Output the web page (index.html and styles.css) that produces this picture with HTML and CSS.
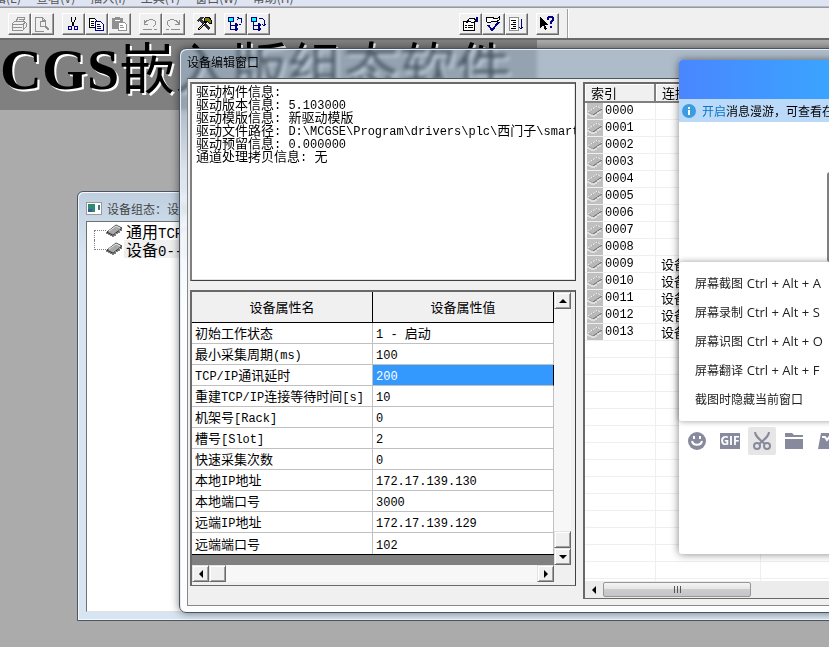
FILE: index.html
```html
<!doctype html><html lang="zh-CN">
<head><meta charset="utf-8"/><title>设备编辑窗口</title>
<meta name="viewport" content="width=device-width, initial-scale=1">
<link rel="stylesheet" href="styles.css">
</head>
<body>

<!-- 共用图标 -->
<svg class="defs" aria-hidden="true">
	<symbol id="chip" viewBox="0 0 17 14">
		<path d="M1 8L10 1L16 4L7 11Z" fill="#a8a8a8" stroke="#444"/>
		<path d="M3 7L10 2L14 4" fill="none" stroke="#e8e8e8"/>
		<path d="M1 8V10M3 9V11M5 10V12M7 11V13M9 10V12M11 8V10M13 7V9M15 5V7" stroke="#000"/>
	</symbol>
	<symbol id="chipoff" viewBox="0 0 16 16">
		<path d="M1 9L10 3L15 6L6 12Z" fill="#b8b8b8" stroke="#a0a0a0"/>
		<path d="M1 9L10 3L15 6" fill="none" stroke="#fff" stroke-dasharray="2 1"/>
		<path d="M6 12L15 6" stroke="#707070"/>
		<path d="M1 10V12M3 11V13M5 12V14M7 12V14M9 11V13M11 9V11M13 8V10" stroke="#fff"/>
	</symbol>
</svg>

<nav class="menubar">
	<a href="#">编辑(E)</a>
	<a href="#">查看(V)</a>
	<a href="#">插入(I)</a>
	<a href="#">工具(T)</a>
	<a href="#">窗口(W)</a>
	<a href="#">帮助(H)</a>
</nav>

<div class="toolbar">
	<div class="group">
		<button type="button" aria-label="打印"><svg viewBox="0 0 16 16"><g fill="none" stroke="#909090"><path d="M5 6L7 1H14L12 6M1 8L4 5H13L15 7V11L12 14H1ZM1 8H12V14M12 8L15 6M2 11H11M8 3H12M7 5H11"/></g></svg></button>
		<button type="button" aria-label="打印预览"><svg viewBox="0 0 16 16"><g fill="none" stroke="#909090"><path d="M1 1H8L11 4V5M1 1V15H10M8 1V4H11"/><circle cx="9" cy="8" r="3"/><path d="M11 10L15 14" stroke-width="2"/></g></svg></button>
	</div>
	<div class="group">
		<button type="button" aria-label="剪切"><svg viewBox="0 0 16 16"><path d="M6 1V4L9 10M10 1V4L7 10" fill="none" stroke="#000"/><circle cx="5" cy="12" r="2" fill="none" stroke="#000080"/><circle cx="11" cy="12" r="2" fill="none" stroke="#000080"/></svg></button>
		<button type="button" aria-label="复制"><svg viewBox="0 0 16 16"><path d="M1 2H6L8 4V11H1Z" fill="#fff" stroke="#000"/><path d="M3 5H6M3 7H6M3 9H6" stroke="#000"/><path d="M7 5H12L15 8V14H7Z" fill="#fff" stroke="#000080"/><path d="M9 8H12M9 10H13M9 12H13" stroke="#000080"/></svg></button>
		<button type="button" aria-label="粘贴"><svg viewBox="0 0 16 16"><path d="M1 2H4V1H9V2H12V13H1Z" fill="#909090"/><path d="M4 4H9" stroke="#fff"/><path d="M7 6H13L15 8V14H7Z" fill="#fff" stroke="#909090"/><path d="M9 9H12M9 11H13" stroke="#909090"/></svg></button>
	</div>
	<div class="group">
		<button type="button" aria-label="撤消"><svg viewBox="0 0 16 16"><path d="M2 4V8H6M2 8C5 2 13 3 14 7C14 9 12 10 11 11M1 13H10M12 13H15" fill="none" stroke="#909090"/></svg></button>
		<button type="button" aria-label="重复"><svg viewBox="0 0 16 16"><path d="M14 4V8H10M14 8C11 2 3 3 2 7C2 9 4 10 5 11M1 13H4M6 13H15" fill="none" stroke="#909090"/></svg></button>
	</div>
	<div class="group">
		<button type="button" aria-label="工具箱"><svg viewBox="0 0 16 16"><path d="M1 4L4 1H8L6 3L7 5L14 12L12 14L5 7L4 5L2 6Z" fill="#333"/><path d="M2 14L10 6" stroke="#000" stroke-width="2"/><path d="M3 13L9 7" stroke="#e8e0a0"/><path d="M8 3L10 1H13L15 4V7H13L11 5L9 6Z" fill="#808000" stroke="#000"/></svg></button>
	</div>
	<div class="group">
		<button type="button" aria-label="设备组态"><svg viewBox="0 0 16 16"><rect x="1" y="1" width="5" height="4" fill="#0ff" stroke="#000080"/><path d="M3 5V13H8M3 9H8M12 2H14V7M10 4L12 2L10 1M12 8L14 9" fill="none" stroke="#000080"/><path d="M8 7L11 9L8 11ZM8 11L11 13L8 15Z" fill="#0aa" stroke="#000080"/></svg></button>
		<button type="button" aria-label="设备展开"><svg viewBox="0 0 16 16"><rect x="1" y="1" width="5" height="4" fill="#0ff" stroke="#000080"/><path d="M3 5V13H8M3 9H8M9 2H12L14 4V10M12 8L14 10L16 8" fill="none" stroke="#000080"/><path d="M8 7L11 9L8 11ZM8 11L11 13L8 15Z" fill="#0aa" stroke="#000080"/></svg></button>
	</div>
	<div class="group group-far">
		<button type="button" aria-label="属性"><svg viewBox="0 0 16 16"><path d="M1 5H12V14H1Z" fill="#fff" stroke="#000"/><path d="M3 9H5M6 9H11M3 11H5M6 11H11M4 7L8 2H12L14 5L10 7L8 5Z" fill="#fff" stroke="#000"/><path d="M15 1V6" stroke="#000080" stroke-width="2"/></svg></button>
		<button type="button" aria-label="检查"><svg viewBox="0 0 16 16"><path d="M1 2L3 1H8V3L10 2L12 3L14 1V4L11 6L8 5L6 6H2Z" fill="#fff" stroke="#000"/><path d="M3 9L7 14L14 6" fill="none" stroke="#000080" stroke-width="2"/></svg></button>
		<button type="button" aria-label="排序"><svg viewBox="0 0 16 16"><path d="M1 1H10V14H1Z" fill="#fff" stroke="#909090"/><path d="M3 4H8M5 6H8M3 8H8M5 10H8M3 12H8" stroke="#000"/><path d="M13 3V13M11 11L13 13L15 11" fill="none" stroke="#000080"/></svg></button>
	</div>
	<div class="group">
		<button type="button" aria-label="帮助"><svg viewBox="0 0 16 16"><path d="M1 0V12L4 9L6 14L8 13L6 9H9Z"/><path d="M9 4V2L10 1H13L14 2V4L12 6V8M12 10V12" fill="none" stroke="#000080" stroke-width="2"/></svg></button>
	</div>
	<div class="separator"></div>
</div>

<main class="desktop">
	<h1 class="banner">CGS<span>嵌入版组态软件</span></h1>

	<section class="window config">
		<header class="titlebar">
			<svg class="winicon" viewBox="0 0 16 13"><rect x="0" y="0" width="16" height="13" fill="#999"/><rect x="1" y="1" width="14" height="11" fill="#fff"/><rect x="2" y="2" width="7" height="8" fill="#2d8a72"/><rect x="2" y="7" width="4" height="3" fill="#3c58a0"/><rect x="12" y="3" width="2" height="5" fill="#3c7a80"/></svg>
			<span>设备组态：设备窗口</span>
		</header>
		<ul class="tree">
			<li><svg><use href="#chip"/></svg><span>通用<b>TCP</b>父设备</span></li>
			<li><svg><use href="#chip"/></svg><span class="current">设备<b>0--</b>[西门子]</span></li>
		</ul>
	</section>

	<section class="window editor">
		<header class="titlebar">设备编辑窗口</header>
		<div class="client">
			<div class="left">
				<div class="info">
					<p>驱动构件信息<b>:</b></p>
					<p>驱动版本信息<b>: 5.103000</b></p>
					<p>驱动模版信息<b>: </b>新驱动模版</p>
					<p>驱动文件路径<b>: D:\MCGSE\Program\drivers\plc\</b>西门子<b>\smart</b></p>
					<p>驱动预留信息<b>: 0.000000</b></p>
					<p>通道处理拷贝信息<b>: </b>无</p>
				</div>
				<div class="props">
					<div class="props-main">
						<table>
							<thead>
								<tr><th>设备属性名</th><th>设备属性值</th></tr>
							</thead>
							<tbody>
								<tr><td>初始工作状态</td><td><b>1 - </b>启动</td></tr>
								<tr><td>最小采集周期<b>(ms)</b></td><td><b>100</b></td></tr>
								<tr><td><b>TCP/IP</b>通讯延时</td><td class="selected"><b>200</b></td></tr>
								<tr><td>重建<b>TCP/IP</b>连接等待时间<b>[s]</b></td><td><b>10</b></td></tr>
								<tr><td>机架号<b>[Rack]</b></td><td><b>0</b></td></tr>
								<tr><td>槽号<b>[Slot]</b></td><td><b>2</b></td></tr>
								<tr><td>快速采集次数</td><td><b>0</b></td></tr>
								<tr><td>本地<b>IP</b>地址</td><td><b>172.17.139.130</b></td></tr>
								<tr><td>本地端口号</td><td><b>3000</b></td></tr>
								<tr><td>远端<b>IP</b>地址</td><td><b>172.17.139.129</b></td></tr>
								<tr><td>远端端口号</td><td><b>102</b></td></tr>
							</tbody>
						</table>
						<div class="vscroll">
							<button type="button" aria-label="向上"><svg viewBox="0 0 8 4"><path d="M0 4L4 0L8 4Z"/></svg></button>
							<div class="track"></div>
							<div class="thumb"></div>
							<button type="button" aria-label="向下"><svg viewBox="0 0 8 4"><path d="M0 0L4 4L8 0Z"/></svg></button>
						</div>
					</div>
					<div class="hscroll">
						<button type="button" aria-label="向左"><svg class="side" viewBox="0 0 4 8"><path d="M4 0L0 4L4 8Z"/></svg></button>
						<div class="thumb"></div>
						<div class="track"></div>
						<button type="button" aria-label="向右"><svg class="side" viewBox="0 0 4 8"><path d="M0 0L4 4L0 8Z"/></svg></button>
					</div>
				</div>
			</div>
			<div class="channels">
				<table>
					<thead>
						<tr><th>索引</th><th>连接变量</th><th></th></tr>
					</thead>
					<tbody>
						<tr><td><svg><use href="#chipoff"/></svg>0000</td><td></td><td></td></tr>
						<tr><td><svg><use href="#chipoff"/></svg>0001</td><td></td><td></td></tr>
						<tr><td><svg><use href="#chipoff"/></svg>0002</td><td></td><td></td></tr>
						<tr><td><svg><use href="#chipoff"/></svg>0003</td><td></td><td></td></tr>
						<tr><td><svg><use href="#chipoff"/></svg>0004</td><td></td><td></td></tr>
						<tr><td><svg><use href="#chipoff"/></svg>0005</td><td></td><td></td></tr>
						<tr><td><svg><use href="#chipoff"/></svg>0006</td><td></td><td></td></tr>
						<tr><td><svg><use href="#chipoff"/></svg>0007</td><td></td><td></td></tr>
						<tr><td><svg><use href="#chipoff"/></svg>0008</td><td></td><td></td></tr>
						<tr><td><svg><use href="#chipoff"/></svg>0009</td><td>设备</td><td></td></tr>
						<tr><td><svg><use href="#chipoff"/></svg>0010</td><td>设备</td><td></td></tr>
						<tr><td><svg><use href="#chipoff"/></svg>0011</td><td>设备</td><td></td></tr>
						<tr><td><svg><use href="#chipoff"/></svg>0012</td><td>设备</td><td></td></tr>
						<tr><td><svg><use href="#chipoff"/></svg>0013</td><td>设备</td><td></td></tr>
					</tbody>
				</table>
				<div class="blank"></div>
				<div class="aeroscroll">
					<button type="button" aria-label="向左"><svg viewBox="0 0 4 8"><path d="M4 0L0 4L4 8Z"/></svg></button>
					<div class="grip"><i></i><i></i><i></i></div>
				</div>
			</div>
		</div>
	</section>

	<section class="chat">
		<header></header>
		<p class="notice">
			<svg viewBox="0 0 14 14"><circle cx="7" cy="7" r="7" fill="#3c9ce0"/><path d="M6 3H8V5H6ZM6 6H8V11H6Z" fill="#fff"/></svg>
			<span><a href="#">开启</a>消息漫游，可查看在其他设备</span>
		</p>
		<div class="history"><div class="bar"></div></div>
		<ul class="shortcuts">
			<li><button type="button">屏幕截图 <kbd>Ctrl + Alt + A</kbd></button></li>
			<li><button type="button">屏幕录制 <kbd>Ctrl + Alt + S</kbd></button></li>
			<li><button type="button">屏幕识图 <kbd>Ctrl + Alt + O</kbd></button></li>
			<li><button type="button">屏幕翻译 <kbd>Ctrl + Alt + F</kbd></button></li>
			<li><button type="button">截图时隐藏当前窗口</button></li>
		</ul>
		<div class="chatbar">
			<button type="button" aria-label="表情"><svg viewBox="0 0 20 18"><circle cx="9" cy="9" r="9" fill="#868a9c"/><path d="M6 4V7M12 4V7" stroke="#fff" stroke-width="2"/><path d="M4 9C5 14 13 14 14 9" fill="none" stroke="#fff" stroke-width="2"/></svg></button>
			<button type="button" class="gif">GIF</button>
			<button type="button" class="on" aria-label="截图"><svg viewBox="0 0 20 18"><g fill="none" stroke="#868a9c" stroke-width="2"><path d="M3 0C3 4 7 7 13 12M17 0C17 4 13 7 7 12"/><circle cx="5" cy="14" r="3"/><circle cx="15" cy="14" r="3"/></g></svg></button>
			<button type="button" aria-label="文件"><svg viewBox="0 0 20 18"><path d="M1 1H8L10 3H19V5H1ZM1 7H19V17H1Z" fill="#868a9c"/></svg></button>
			<button type="button" aria-label="更多"><svg viewBox="0 0 20 18"><path d="M5 1H20V17H2Z" fill="#868a9c"/><path d="M6 5H9L11 8L14 4H17" fill="none" stroke="#fff" stroke-width="2"/></svg></button>
		</div>
	</section>
</main>

</body></html>
```

FILE: styles.css
```css
* {box-sizing: border-box;}
html, body {height: 100%;}
body {
	margin: 0;
	display: flex;
	flex-direction: column;
	overflow: hidden;
	font: 12px/16px "Noto Sans CJK SC", sans-serif;
	color: #000;
	background: #ababab;
}
p, ul, h1 {margin: 0; padding: 0;}
ul {list-style: none;}
button {padding: 0; margin: 0; border: 0; font: inherit; color: inherit;}
svg {display: block; flex: none;}
.defs {position: absolute; width: 0; height: 0;}

/* 半角字符，不影响行高 */
b {
	font: 12px/0 "Liberation Mono", monospace;
	white-space: pre;
}

/* 菜单栏（上半部分滚出画面） */
.menubar {
	display: flex;
	align-items: flex-end;
	gap: 15px;
	height: 7px;
	margin-left: -18px;
	overflow: hidden;
	flex: none;
	background: #dfe4f3;
	border-bottom: 1px solid #b4b8c8;
}
.menubar a {color: #555; text-decoration: none; white-space: nowrap;}

.toolbar {
	display: flex;
	align-items: center;
	gap: 8px;
	height: 33px;
	padding: 1px 0 0 8px;
	flex: none;
	background: #f0f0f0;
	border-top: 1px solid #999;
	border-bottom: 2px solid #696969;
}
.toolbar .group {display: flex;}
.toolbar .group-far {margin-left: 181px;}
.toolbar button {
	width: 23px;
	height: 22px;
	padding: 2px;
	background: #f0f0f0;
	border: 1px solid;
	border-color: #fff #696969 #696969 #fff;
	box-shadow: inset -1px -1px #a0a0a0;
}
.toolbar svg {width: 16px; height: 16px; shape-rendering: crispEdges;}
.separator {width: 2px; align-self: stretch; border-left: 1px solid #a0a0a0; background: #fff;}

.desktop {position: relative; flex: 1; overflow: hidden;}
.banner {
	width: 537px;
	height: 70px;
	font: bold 58px/50px "Liberation Serif", "Noto Sans CJK SC", serif;
	white-space: nowrap;
	background: #808080;
	text-shadow: 2px 2px #fff;
}
.banner span {font: 56px/50px "Noto Sans CJK SC", sans-serif;}

.window {
	position: absolute;
	display: flex;
	flex-direction: column;
	border: 1px solid #4c5560;
	border-radius: 7px;
}

/* 设备组态窗口 */
.config {
	top: 151px;
	left: 77px;
	right: -30px;
	bottom: 26px;
	padding: 0 7px 8px 8px;
	border-radius: 6px 6px 0 0;
	background: linear-gradient(#bfcfdf, #d7e4f2 60px);
	box-shadow: inset 1px 1px #f4f8fc, inset -1px -1px #f4f8fc;
}
.config .titlebar {
	display: flex;
	align-items: center;
	gap: 5px;
	height: 29px;
	padding-top: 4px;
	color: #444;
}
.winicon {width: 16px; height: 13px;}
.tree {
	flex: 1;
	padding: 0 7px;
	font-size: 16px;
	line-height: 18px;
	background: #fff;
	border: 1px solid #707070;
	border-bottom-color: #e0e0e0;
}
.tree li {display: flex; align-items: center;}
.tree li::before {
	content: "";
	width: 11px;
	height: 9px;
	align-self: flex-end;
	border: 1px dotted #808080;
	border-width: 1px 0 0 1px;
}
.tree li:last-child::before {align-self: flex-start; border-width: 0 0 1px 1px;}
.tree svg {width: 17px; height: 14px;}
.tree span {padding: 0 2px; margin-left: 1px; white-space: nowrap;}
.tree b {font-size: 14px;}
.tree .current {background: #efefef;}

/* 设备编辑窗口 */
.editor {
	top: 8px;
	left: 179px;
	right: -30px;
	bottom: 34px;
	padding: 0 6px 6px 7px;
	background: linear-gradient(rgba(180, 215, 250, .4), rgba(180, 215, 250, .4) 60px, rgba(230, 240, 250, .8) 120px, #fbfdfe 260px);
	backdrop-filter: blur(2px);
	box-shadow: inset 1px 1px #e4ecf4, 0 0 8px rgba(0, 0, 0, .5);
}
.editor .titlebar {height: 29px; padding-top: 5px;}
.client {
	display: flex;
	flex: 1;
	gap: 7px;
	min-height: 0;
	padding: 3px 2px 6px;
	background: #f0f0f0;
	border: 1px solid #888;
	border-top-color: #50565e;
}
.left {
	display: flex;
	flex-direction: column;
	gap: 9px;
	width: 386px;
	flex: none;
	padding-bottom: 13px;
}
.info {
	height: 199px;
	flex: none;
	padding: 0 4px;
	overflow: hidden;
	font-size: 13px;
	line-height: 13px;
	white-space: nowrap;
	background: #fff;
	border: 2px solid #696969;
	border-width: 2px 1px 1px 2px;
	border-color: #696969 #404040 #404040 #808080;
	box-shadow: inset -1px -1px #e3e3e3;
}
.props {
	flex: 1;
	display: flex;
	flex-direction: column;
	padding: 0 4px 3px 0;
	border: 2px solid #696969;
	border-width: 2px 1px 1px 2px;
	border-right-color: #404040;
}
.props-main {display: flex; flex: 1; background: #808080;}
.props table {
	flex: 1;
	align-self: flex-start;
	table-layout: fixed;
	border-collapse: separate;
	border-spacing: 0;
	border-bottom: 1px solid #000;
	font-size: 13px;
	line-height: 20px;
	background: #fff;
}
.props th {
	height: 31px;
	padding: 0;
	font-weight: normal;
	background: #f0f0f0;
	border: 1px solid #000;
	border-width: 0 1px 1px 0;
}
.props td {
	width: 181px;
	height: 21px;
	padding: 0 3px;
	white-space: nowrap;
	border: 1px solid #c0c0c0;
	border-width: 0 1px 1px 0;
}
.props tr:last-child td {border-bottom-width: 0;}
.props td.selected {color: #fff; background: #3399ff; border-right-color: #000;}

.vscroll {display: flex; flex-direction: column; width: 17px; flex: none;}
.hscroll {display: flex; height: 17px; padding-right: 17px; background: #f0f0f0;}
.vscroll button, .hscroll button, .thumb {
	display: flex;
	align-items: center;
	justify-content: center;
	width: 17px;
	height: 17px;
	flex: none;
	background: #f0f0f0;
	border: 1px solid;
	border-color: #e3e3e3 #696969 #696969 #e3e3e3;
	box-shadow: inset 1px 1px #fff, inset -1px -1px #a0a0a0;
}
.vscroll svg {width: 8px; height: 4px;}
.side {width: 4px; height: 8px;}
.track {flex: 1; background: #f7f7f7;}

/* 通道列表 */
.channels {
	flex: 1;
	display: flex;
	flex-direction: column;
	min-width: 0;
	overflow: hidden;
	background: #fff;
	border: 2px solid #696969;
	border-width: 2px 1px 1px 2px;
}
.channels table {
	width: 100%;
	table-layout: fixed;
	border-collapse: separate;
	border-spacing: 0;
}
.channels th {
	height: 19px;
	padding: 0 6px;
	font: 13px/14px "Noto Sans CJK SC", sans-serif;
	text-align: left;
	background: #f0f0f0;
	border: 1px solid #808080;
	border-width: 0 2px 2px 0;
	box-shadow: inset 1px 1px #fff;
}
.channels th:nth-child(1) {width: 71px;}
.channels th:nth-child(2) {width: 105px;}
.channels td {
	height: 17px;
	padding: 0 5px;
	font-size: 13px;
	line-height: 16px;
	border: 1px solid #efefef;
	border-width: 0 1px 1px 0;
}
.channels td:first-child {
	display: flex;
	gap: 2px;
	padding: 0 2px;
	font: 12px/17px "Liberation Mono", monospace;
}
.channels td svg {width: 16px; height: 16px; background: #c0c0c0;}
.blank {
	flex: 1;
	background:
		linear-gradient(90deg, transparent 70px, #efefef 70px, #efefef 71px, transparent 71px, transparent 175px, #efefef 175px, #efefef 176px, transparent 176px),
		repeating-linear-gradient(#fff, #fff 16px, #efefef 16px, #efefef 17px);
}
.aeroscroll {display: flex; height: 17px; background: #ececec;}
.aeroscroll button {
	display: flex;
	align-items: center;
	justify-content: center;
	width: 17px;
	background: none;
}
.aeroscroll svg {width: 4px; height: 8px;}
.grip {
	display: flex;
	align-items: center;
	justify-content: center;
	gap: 2px;
	width: 148px;
	margin: 1px;
	background: linear-gradient(#f4f4f4, #e4e4e4 50%, #cdcdd0 50%, #c4c4c8);
	border: 1px solid #979797;
	border-radius: 2px;
}
.grip i {width: 1px; height: 7px; background: #555;}

/* 聊天窗口 */
.chat {
	position: absolute;
	top: 20px;
	left: 679px;
	right: -40px;
	display: flex;
	flex-direction: column;
	height: 494px;
	background: #fff;
	border-radius: 3px;
	box-shadow: 0 0 8px rgba(0, 0, 0, .5);
}
.chat header {
	height: 39px;
	flex: none;
	border-radius: 3px 3px 0 0;
	background: linear-gradient(90deg, #4a86ff, #3aa4ff 150px);
}
.notice {
	display: flex;
	align-items: center;
	gap: 6px;
	height: 23px;
	padding-left: 3px;
	white-space: nowrap;
	background: #bbd9f8;
}
.notice svg {width: 14px; height: 14px;}
.notice a {color: #0a74c8; text-decoration: none;}
.history {height: 140px; padding-top: 50px;}
.bar {width: 8px; height: 90px; margin-left: 148px; border-radius: 3px; background: #808080;}
.shortcuts {
	padding: 6px 0 8px;
	background: #fff;
	border-radius: 3px;
	box-shadow: 0 0 6px rgba(0, 0, 0, .4);
}
.shortcuts button {
	width: 100%;
	height: 29px;
	padding-left: 16px;
	text-align: left;
	white-space: nowrap;
	color: #222;
	background: none;
}
.shortcuts kbd {font: 13px/0 "Open Sans", sans-serif; margin-left: 1px;}
.chatbar {display: flex; gap: 4px; padding: 6px 5px;}
.chatbar button {
	display: flex;
	align-items: center;
	justify-content: center;
	width: 28px;
	height: 28px;
	flex: none;
	background: none;
}
.chatbar svg {width: 20px; height: 18px;}
.chatbar .on {background: #e6e6e6; border-radius: 2px;}
.chatbar .gif {
	width: 20px;
	height: 16px;
	margin: 6px 4px;
	font: bold 12px/16px "Open Sans", sans-serif;
	color: #fff;
	background: #868a9c;
}
```
